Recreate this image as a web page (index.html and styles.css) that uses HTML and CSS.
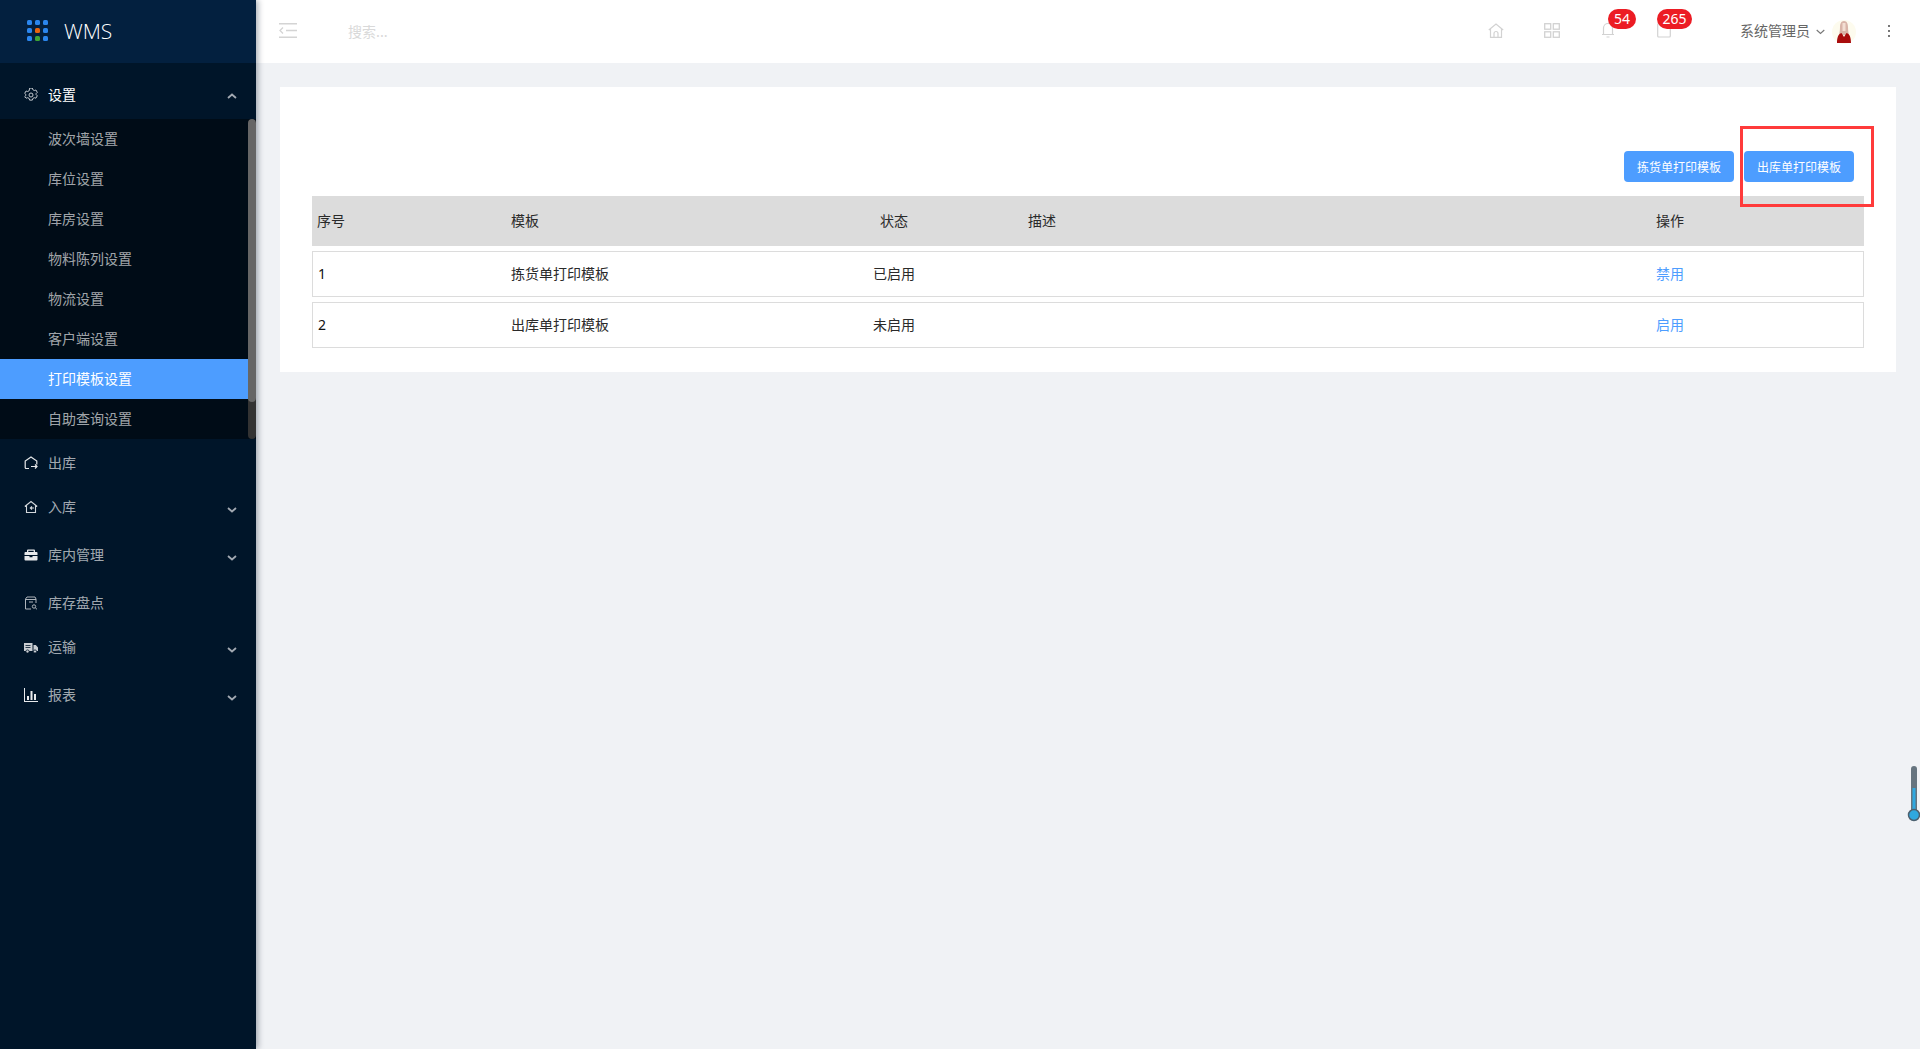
FILE: index.html
```html
<!DOCTYPE html>
<html lang="zh-CN">
<head>
<meta charset="utf-8">
<title>WMS</title>
<link rel="stylesheet" href="styles.css">
</head>
<body>
<div class="app">
  <aside class="sidebar">
    <div class="logo">
      <svg class="logo-mark" width="22" height="22" viewBox="0 0 22 22">
        <g fill="#2b86ee">
          <rect x="0" y="0" width="5" height="5" rx="1.5"/><rect x="8" y="0" width="5" height="5" rx="1.5"/><rect x="16" y="0" width="5" height="5" rx="1.5"/>
          <rect x="0" y="8" width="5" height="5" rx="1.5"/><rect x="16" y="8" width="5" height="5" rx="1.5"/>
          <rect x="0" y="16" width="5" height="5" rx="1.5"/><rect x="16" y="16" width="5" height="5" rx="1.5"/>
        </g>
        <rect x="8" y="8" width="5" height="5" rx="1.5" fill="#e8650f"/>
        <rect x="8" y="16" width="5" height="5" rx="1.5" fill="#3fa535"/>
      </svg>
      <span class="logo-text">WMS</span>
    </div>
    <nav class="menu">
      <div class="menu-item open">
        <svg class="mi" viewBox="0 0 14 14" fill="none" stroke="#c4c9cf" stroke-width="1"><path d="M5.600 1h2.800l.4 1.600 1.500.8 1.600-.5 1.400 2.400-1.200 1.200v1l1.200 1.200-1.400 2.400-1.600-.5-1.500.8-.4 1.600H5.600l-.4-1.600-1.500-.8-1.600.5L.7 9.600 1.900 8.400v-1L.7 6.300 2.100 3.900l1.600.5 1.500-.8z" transform="translate(0 -.9)"/><circle cx="7" cy="7" r="2"/></svg>
        <span class="mt">设置</span>
        <svg class="chev up" viewBox="0 0 10 6"><path d="M1 5l4-3.500L9 5" fill="none" stroke="#a2a9b2" stroke-width="1.800"/></svg>
      </div>
      <div class="submenu">
        <a class="sub">波次墙设置</a>
        <a class="sub">库位设置</a>
        <a class="sub">库房设置</a>
        <a class="sub">物料陈列设置</a>
        <a class="sub">物流设置</a>
        <a class="sub">客户端设置</a>
        <a class="sub active">打印模板设置</a>
        <a class="sub">自助查询设置</a>
        <div class="scroll-thumb"><div class="scroll-head"></div></div>
      </div>
      <div class="row plain">
        <svg class="mi" viewBox="0 0 14 14" fill="none" stroke="#e6e8ea" stroke-width="1.200"><path d="M5 12.500H2.200A1 1 0 0 1 1.200 11.500V5L7 1l5.800 4v3.500"/><path d="M7 10.500h6M11 8.500l2 2-2 2"/></svg>
        <span class="rt">出库</span>
      </div>
      <div class="row arrow">
        <svg class="mi" viewBox="0 0 14 14" fill="none" stroke="#d3d7db" stroke-width="1.100"><path d="M.8 6.500L7 1.500l6.200 5M2.500 5.500v7h9v-7"/><path d="M10 8H6.500M8 6.500L6.300 8 8 9.500"/></svg>
        <span class="rt">入库</span>
        <svg class="chev" viewBox="0 0 10 6"><path d="M1 1l4 3.500L9 1" fill="none" stroke="#a2a9b2" stroke-width="1.800"/></svg>
      </div>
      <div class="row arrow">
        <svg class="mi" viewBox="0 0 14 14"><path fill="#e8eaec" d="M4 1.500h6a1 1 0 0 1 1 1V4h1.500A1 1 0 0 1 13.500 5v2H.5V5a1 1 0 0 1 1-1H3V2.500a1 1 0 0 1 1-1zM4.300 2.700V4h5.400V2.700zM.5 8h5v1.200h3V8h5v3.500a1 1 0 0 1-1 1h-11a1 1 0 0 1-1-1z"/></svg>
        <span class="rt">库内管理</span>
        <svg class="chev" viewBox="0 0 10 6"><path d="M1 1l4 3.500L9 1" fill="none" stroke="#a2a9b2" stroke-width="1.800"/></svg>
      </div>
      <div class="row plain">
        <svg class="mi" viewBox="0 0 14 14" fill="none" stroke="#aeb4bb" stroke-width="1"><path d="M7 13H1.500V3L3 1h8l1 2v4M1.500 3.500H12M5 6h4"/><circle cx="10" cy="10.500" r="1.700"/><path d="M11.300 11.800l1.700 1.500"/></svg>
        <span class="rt">库存盘点</span>
      </div>
      <div class="row arrow">
        <svg class="mi" viewBox="0 0 14 14"><path fill="#c9cdd2" d="M0 3h8.500v8H0zM9.500 5h2.300L14 7.500V11H9.500z"/><path fill="none" stroke="#001529" stroke-width=".8" d="M1.500 5.500h5M1.500 7.500h5"/><circle cx="3.500" cy="11.500" r="1.600" fill="#c9cdd2" stroke="#001529" stroke-width=".8"/><circle cx="11" cy="11.500" r="1.600" fill="#c9cdd2" stroke="#001529" stroke-width=".8"/></svg>
        <span class="rt">运输</span>
        <svg class="chev" viewBox="0 0 10 6"><path d="M1 1l4 3.500L9 1" fill="none" stroke="#a2a9b2" stroke-width="1.800"/></svg>
      </div>
      <div class="row arrow">
        <svg class="mi" viewBox="0 0 14 14"><path fill="#e8eaec" d="M0 0h1v13h14v1H0zM3 8h2v4H3zM6.500 3h2v9h-2zM10 6h2v6h-2z"/></svg>
        <span class="rt">报表</span>
        <svg class="chev" viewBox="0 0 10 6"><path d="M1 1l4 3.500L9 1" fill="none" stroke="#a2a9b2" stroke-width="1.800"/></svg>
      </div>
    </nav>
  </aside>
  <div class="main">
    <header class="topbar">
      <svg class="burger" width="18" height="15" viewBox="0 0 18 15" fill="none" stroke="#d4d4d4" stroke-width="1.500"><path d="M0 .8h18M7 7.500h11M0 14.200h18"/><path d="M4 4.500L1 7.500l3 3" stroke-width="1.300"/></svg>
      <span class="search">搜索...</span>
      <div class="tools">
        <span class="tool">
          <svg width="16" height="15" viewBox="0 0 16 15" fill="none" stroke="#d2d2d2" stroke-width="1.200"><path d="M.8 7L8 1l7.200 6M2.500 6v8.300h11V6"/><path d="M6 14v-3.500a2 2 0 0 1 4 0V14"/></svg>
        </span>
        <span class="tool">
          <svg width="16" height="15" viewBox="0 0 16 15" fill="none" stroke="#d2d2d2" stroke-width="1.300"><rect x=".7" y=".7" width="6" height="5.500"/><rect x="9.300" y=".7" width="6" height="5.500"/><rect x=".7" y="8.800" width="6" height="5.500"/><rect x="9.300" y="8.800" width="6" height="5.500"/></svg>
        </span>
        <span class="tool">
          <svg width="14" height="16" viewBox="0 0 14 16" fill="none" stroke="#d2d2d2" stroke-width="1.200"><path d="M1 12.500h12M2.500 12.500V6a4.500 4.500 0 0 1 9 0v6.500M5.500 15h3"/></svg>
          <b class="badge b54">54</b>
        </span>
        <span class="tool">
          <svg width="14" height="15" viewBox="0 0 14 15" fill="none" stroke="#d2d2d2" stroke-width="1.200"><rect x=".7" y=".7" width="12.600" height="13.300" rx="1"/></svg>
          <b class="badge b265">265</b>
        </span>
      </div>
      <div class="user">
        <span class="uname">系统管理员</span>
        <svg class="uchev" width="9" height="6" viewBox="0 0 9 6"><path d="M.7 1l3.800 3.500L8.300 1" fill="none" stroke="#777" stroke-width="1.100"/></svg>
        <svg class="avatar" width="24" height="24" viewBox="0 0 24 24">
          <circle cx="12" cy="12" r="12" fill="#fdfbee"/>
          <path d="M12 1c-3 0-4 3-4 6 0 3-.5 6-1 8h10c-.5-2-1-5-1-8 0-3-1-6-4-6z" fill="#d9b5a8"/>
          <path d="M10.500 3h3v8h-3z" fill="#f3dfd2"/>
          <path d="M5 23c0-5 1-9 4.500-10L12 17l2.500-4C18 14 19 18 19 23z" fill="#a90d0d"/>
        </svg>
      </div>
      <svg class="dots" width="4" height="14" viewBox="0 0 4 14" fill="#777"><rect x="1" y="1" width="2" height="2"/><rect x="1" y="6" width="2" height="2"/><rect x="1" y="11" width="2" height="2"/></svg>
    </header>
    <main class="content">
      <section class="card">
        <div class="actions">
          <button class="btn">拣货单打印模板</button>
          <button class="btn">出库单打印模板</button>
          <div class="mark"></div>
        </div>
        <div class="table">
          <div class="tr head">
            <span class="c1">序号</span><span class="c2">模板</span><span class="c3">状态</span><span class="c4">描述</span><span class="c5">操作</span>
          </div>
          <div class="tr body">
            <span class="c1 num">1</span><span class="c2">拣货单打印模板</span><span class="c3">已启用</span><span class="c4"></span><span class="c5"><a class="link">禁用</a></span>
          </div>
          <div class="tr body">
            <span class="c1 num">2</span><span class="c2">出库单打印模板</span><span class="c3">未启用</span><span class="c4"></span><span class="c5"><a class="link">启用</a></span>
          </div>
        </div>
      </section>
    </main>
  </div>
</div>
<div class="thermo">
  <svg width="14" height="58" viewBox="0 0 14 58">
    <rect x="4" y="0" width="6" height="48" rx="3" fill="#66747f"/>
    <rect x="5.500" y="22" width="3" height="28" fill="#2fa8e0"/>
    <circle cx="7" cy="49" r="5.500" fill="#2fa8e0" stroke="#4d6170" stroke-width="1.500"/>
  </svg>
</div>
</body>
</html>
```
FILE: styles.css
```css
* { box-sizing: border-box; }
html, body { margin: 0; height: 100%; overflow: hidden; }
body {
  font-family: "Noto Sans CJK SC", "Noto Sans", sans-serif;
  font-size: 14px;
  color: #2a2a2a;
  background: #f0f2f5;
}
.app { display: flex; height: 1049px; }

.sidebar {
  width: 256px;
  flex: none;
  background: #001529;
  box-shadow: 2px 0 6px rgba(0, 21, 41, .35);
  position: relative;
  z-index: 2;
}
.logo {
  height: 63px;
  background: #03203f;
  display: flex;
  align-items: center;
  padding: 0 0 0 27px;
}
.logo-mark { margin-top: -2px; }
.logo-text {
  font-family: "Open Sans", sans-serif;
  font-weight: 300;
  font-size: 21px;
  color: #fff;
  margin-left: 15px;
  line-height: 1;
}
.menu-item {
  height: 56px;
  display: flex;
  align-items: center;
  padding: 5px 19px 0 24px;
  color: #fff;
  position: relative;
}
.mi { width: 14px; height: 14px; flex: none; margin-right: 10px; }
.menu-item .mi { margin-top: 3px; }
.mt, .rt { line-height: 20px; flex: 1; }
.rt { color: rgba(255, 255, 255, .65); }
.chev { width: 10px; height: 6px; flex: none; }
.chev.up { margin-top: 4px; }

.submenu { background: #000c17; position: relative; }
.sub {
  display: block;
  height: 40px;
  line-height: 38px;
  padding-left: 48px;
  color: rgba(255, 255, 255, .65);
}
.sub.active { background: #4d9dff; color: #fff; }
.scroll-thumb {
  position: absolute;
  top: 0;
  right: 0;
  width: 8px;
  height: 320px;
  background: #333;
  border-radius: 4px;
  overflow: hidden;
}
.scroll-head { height: 283px; background: #666; border-radius: 4px; }

.row {
  display: flex;
  align-items: flex-start;
  padding: 13px 19px 0 24px;
}
.row.plain { height: 44px; }
.row.arrow { height: 48px; }
.row .mi { margin-top: 4px; }
.row .chev { margin-top: 11px; }

.main { flex: 1; display: flex; flex-direction: column; min-width: 0; }
.topbar {
  height: 63px;
  flex: none;
  background: #fff;
  display: flex;
  align-items: center;
  padding-left: 23px;
}
.burger { margin-top: -2px; }
.search {
  margin-left: 51px;
  color: #d9d9d9;
  font-size: 14px;
  margin-top: -1px;
}
.tools { margin-left: auto; display: flex; }
.tool {
  width: 56px;
  height: 20px;
  display: flex;
  align-items: center;
  justify-content: center;
  position: relative;
  margin-top: -3px;
}
.badge {
  position: absolute;
  top: -11px;
  height: 20px;
  line-height: 20px;
  border-radius: 10px;
  background: #ec1c24;
  color: #fff;
  font-family: "Noto Sans", sans-serif;
  font-weight: 400;
  font-size: 14px;
  text-align: center;
}
.b54 { left: 28px; width: 28px; }
.b265 { left: 21px; width: 35px; }
.user { display: flex; align-items: center; margin-left: 48px; }
.uname { color: #666; line-height: 20px; margin-bottom: 3px; }
.uchev { margin: 0 7px 0 6px; }
.avatar { display: block; }
.dots { margin: -2px 29px 0 31px; }

.content { flex: 1; padding: 24px; }
.card { background: #fff; padding: 64px 32px 24px; }
.actions {
  display: flex;
  justify-content: flex-end;
  gap: 10px;
  padding-right: 10px;
  position: relative;
}
.btn {
  width: 110px;
  height: 31px;
  padding: 0;
  border: 0;
  border-radius: 4px;
  background: #4d9dff;
  color: #fff;
  font: 12px "Noto Sans CJK SC", sans-serif;
}
.mark {
  position: absolute;
  top: -25px;
  right: -10px;
  width: 134px;
  height: 81px;
  border: 3px solid #ff3b3b;
}
.table { margin-top: 14px; display: flex; flex-direction: column; gap: 5px; }
.tr {
  display: grid;
  grid-template-columns: 194px 328px 120px 697px 213px;
  align-items: center;
  padding-bottom: 2px;
}
.tr.head { height: 50px; background: #dcdcdc; }
.tr.body { height: 46px; box-shadow: inset 0 0 0 1px #dcdcdc; }
.c1 { padding-left: 5px; }
.c2 { padding-left: 5px; }
.c3 { text-align: center; }
.c4 { padding-left: 74px; }
.c5 { padding-left: 5px; }
.num { padding-left: 6px; font-family: "Noto Sans", sans-serif; color: #111; }
.link { color: #4d9dff; }

.thermo { position: fixed; left: 1907px; top: 766px; line-height: 0; }
```
